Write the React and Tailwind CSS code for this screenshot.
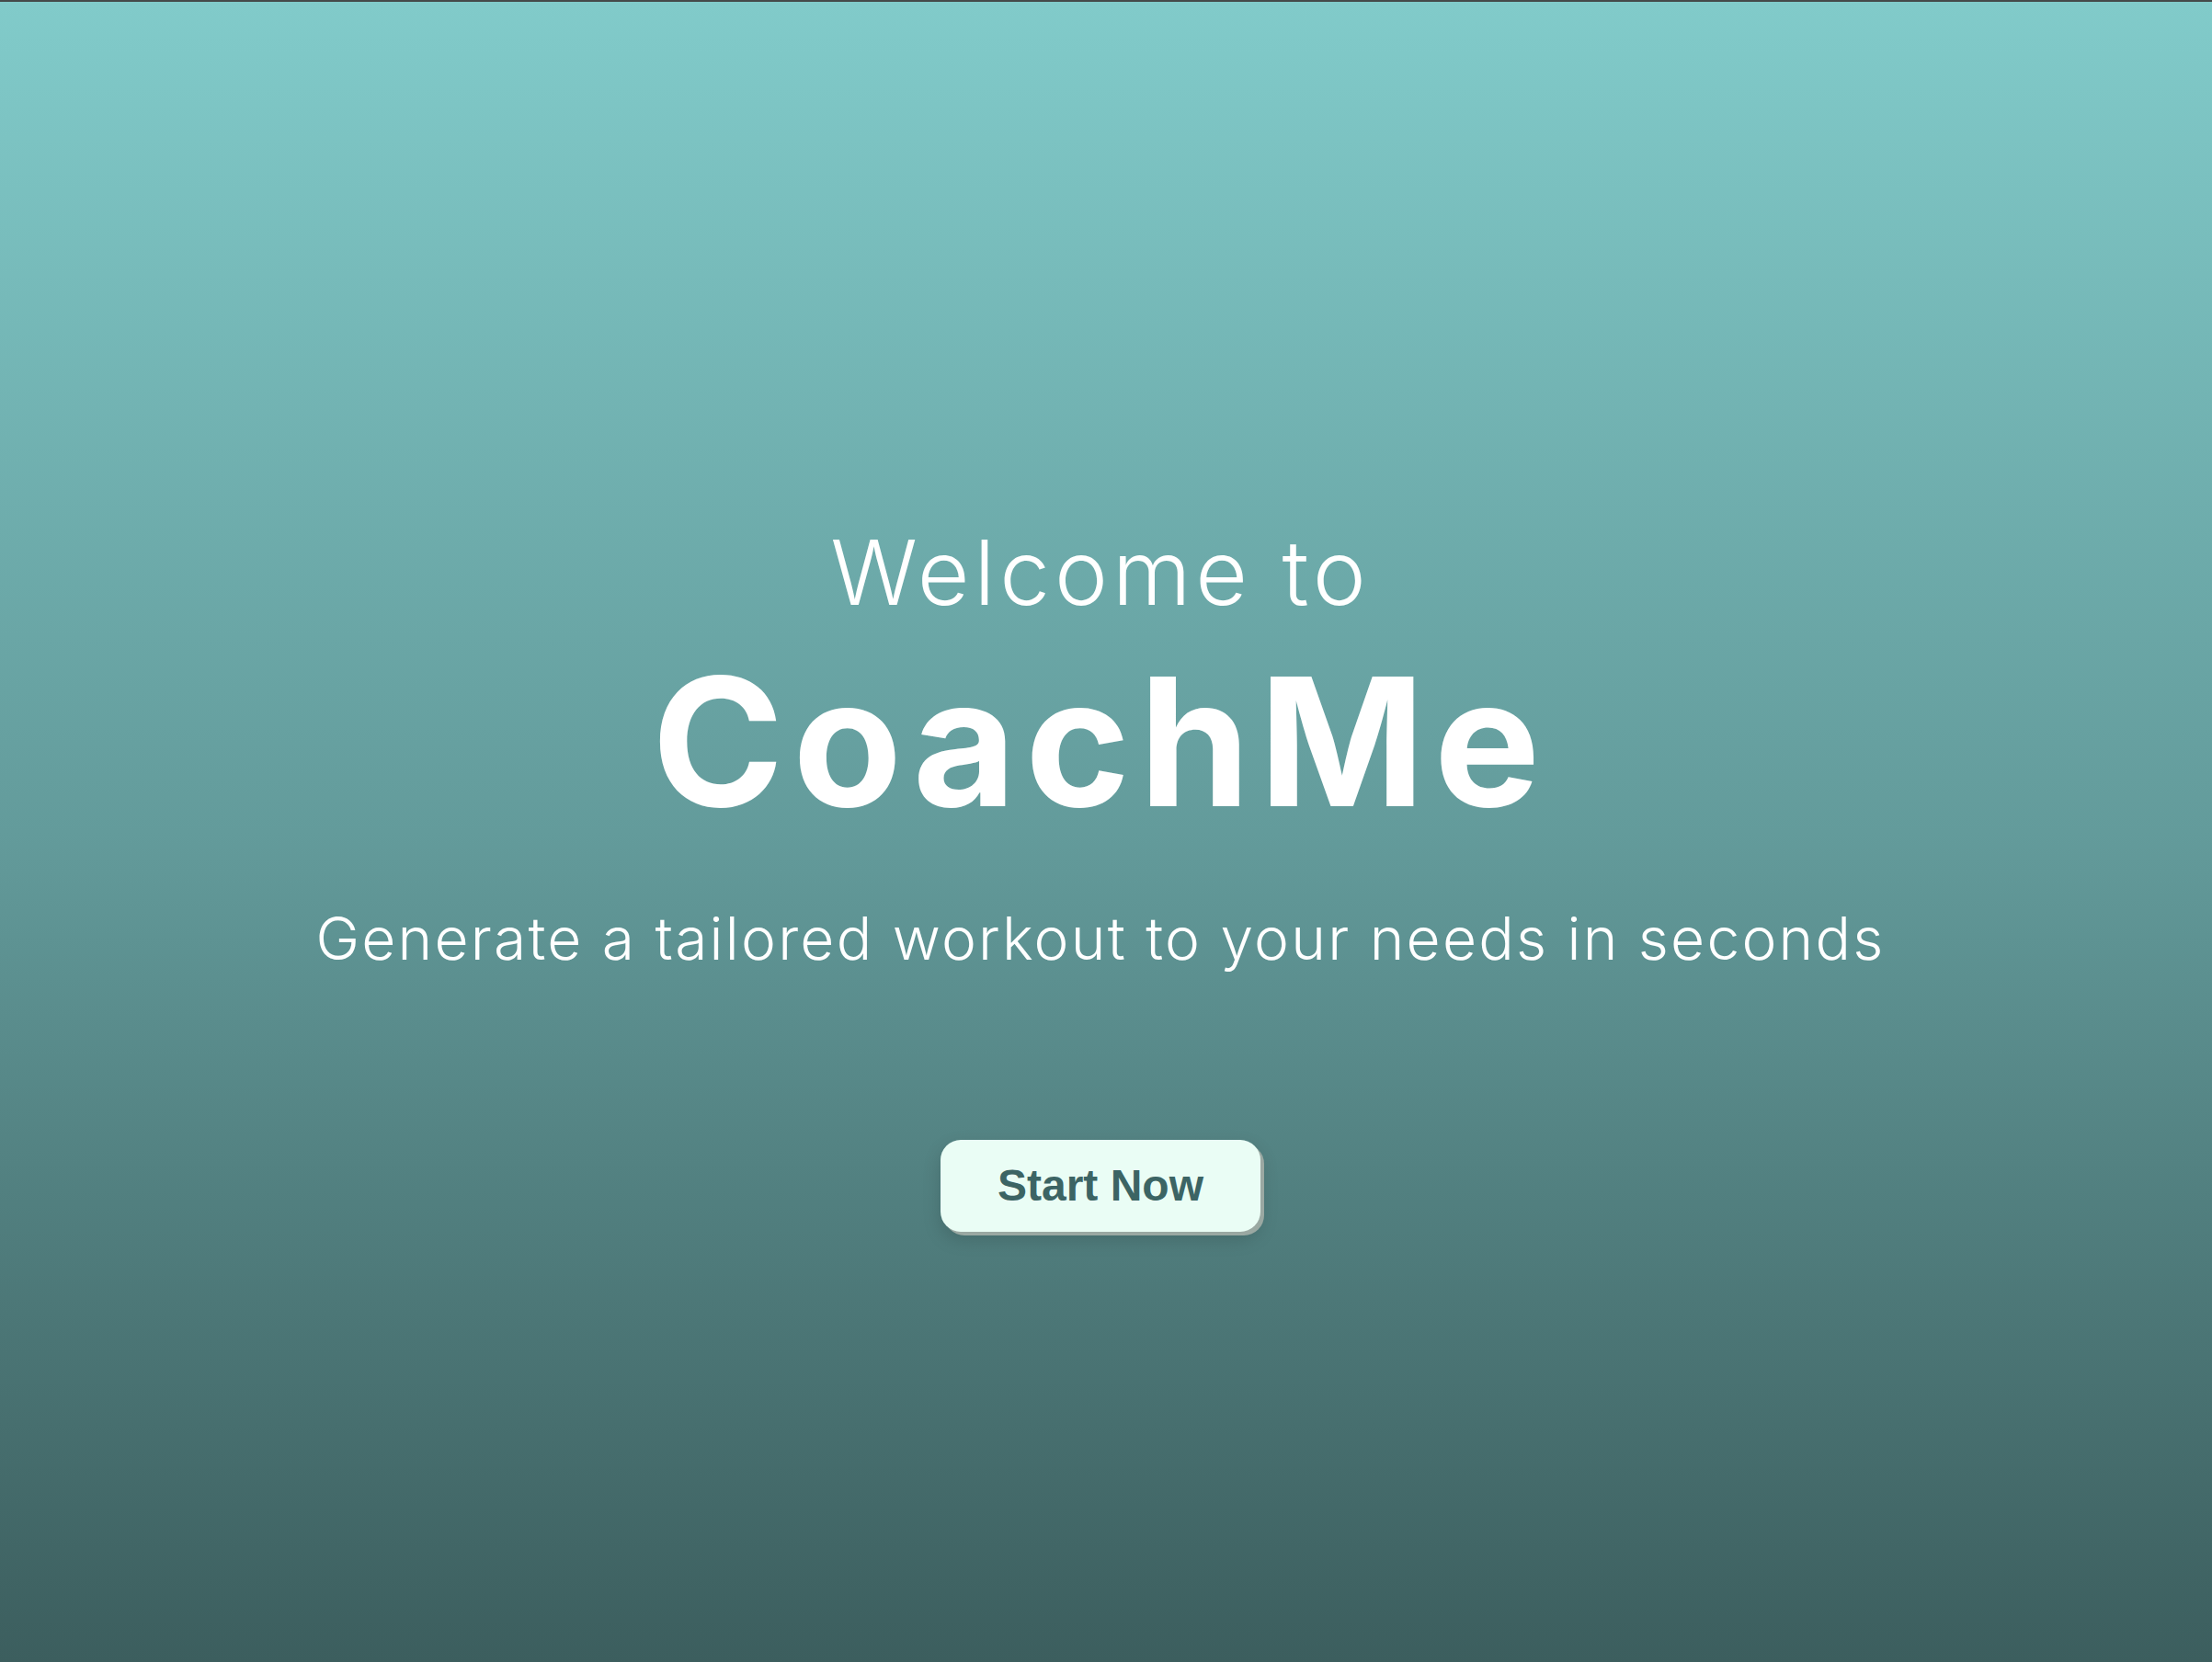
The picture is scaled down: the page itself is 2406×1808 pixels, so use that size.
export default function App() {
  return (
    <div className="w-full h-[1808px] border-t-2 border-[#454a4a] bg-gradient-to-b from-[#81cbca] via-[#639b9b] to-[#3c5e5e] flex flex-col items-center pr-[12px] font-['Inter',sans-serif] text-white">
      <div className="pt-[572px] text-[98px] font-light leading-none tracking-[0.05em]">Welcome to</div>
      <div className="mt-[38px] text-[194px] font-bold leading-none tracking-[0.05em]">CoachMe</div>
      <div className="mt-[85px] text-[64px] font-light leading-none tracking-[0.035em]">Generate a tailored workout to your needs in seconds</div>
      <button className="mt-[187px] w-[348px] h-[100px] rounded-[22px] bg-[#eafdf5] text-[#3c6464] font-['Liberation_Sans',sans-serif] font-bold text-[48px] shadow-[4px_4px_0_#9aa8a2,0_8px_20px_rgba(0,0,0,0.15)]">
        Start Now
      </button>
    </div>
  );
}
